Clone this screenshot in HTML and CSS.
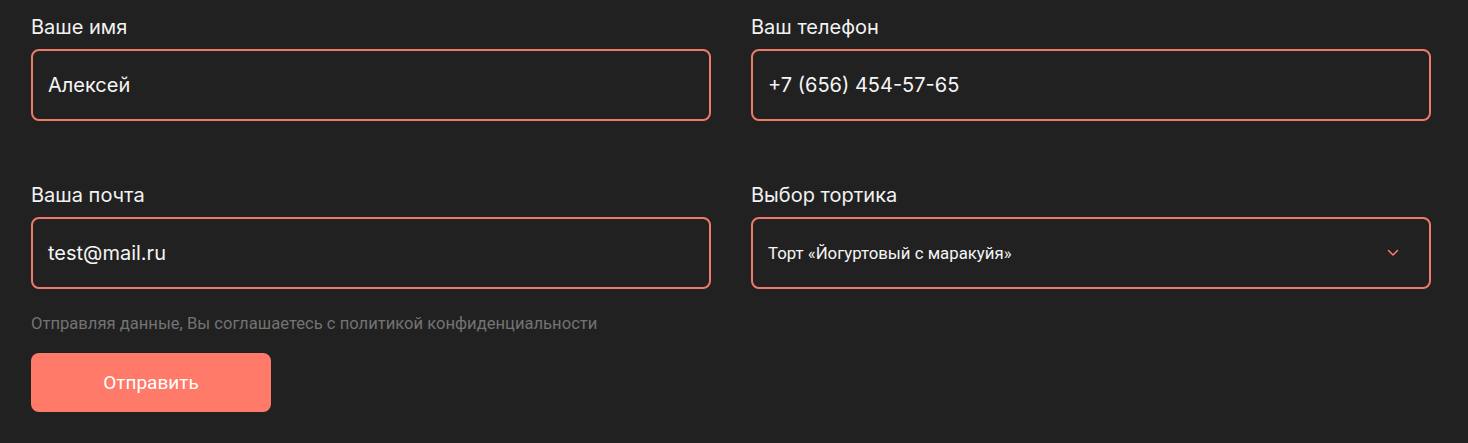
FILE: index.html
```html
<!DOCTYPE html>
<html lang="ru">
<head>
<meta charset="utf-8">
<link rel="stylesheet" href="styles.css">
</head>
<body>
<form class="form">
  <div class="grid">
    <label class="field">
      <span class="label">Ваше имя</span>
      <span class="input">Алексей</span>
    </label>
    <label class="field">
      <span class="label">Ваш телефон</span>
      <span class="input">+7 (656) 454-57-65</span>
    </label>
    <label class="field">
      <span class="label">Ваша почта</span>
      <span class="input">test@mail.ru</span>
    </label>
    <label class="field">
      <span class="label">Выбор тортика</span>
      <span class="input select">
        <span class="select-text">Торт «Йогуртовый с маракуйя»</span>
        <svg class="chevron" width="12" height="8" viewBox="0 0 12 8"><path d="M1.5 1.5 L6 6 L10.5 1.5" fill="none" stroke="#f07a68" stroke-width="1.6" stroke-linecap="round" stroke-linejoin="round"/></svg>
      </span>
    </label>
  </div>
  <p class="note">Отправляя данные, Вы соглашаетесь с политикой конфиденциальности</p>
  <button type="button" class="btn">Отправить</button>
</form>
</body>
</html>
```
FILE: styles.css
```css
html, body {
  margin: 0;
  background: #212121;
}
body {
  font-family: Inter, "Noto Sans", sans-serif;
  color: #ffffff;
}
.form {
  padding: 16px 37px 0 31px;
}
.grid {
  display: grid;
  grid-template-columns: 680px 680px;
  column-gap: 40px;
  row-gap: 63px;
}
.field {
  display: flex;
  flex-direction: column;
  gap: 11px;
}
.label {
  font-size: 20px;
  line-height: 22px;
  height: 22px;
  color: #f2f2f2;
}
.input {
  box-sizing: border-box;
  height: 72px;
  border: 2px solid #f07a68;
  border-radius: 8px;
  display: flex;
  align-items: center;
  padding: 0 15px;
  font-size: 20px;
  color: #f5f5f5;
}
.select {
  justify-content: space-between;
  padding-right: 30px;
}
.select-text {
  font-family: Roboto, "Liberation Sans", sans-serif;
  font-size: 16.8px;
  color: #f5f5f5;
}
.chevron {
  display: block;
}
.note {
  margin: 26px 0 0;
  font-family: Roboto, "Liberation Sans", sans-serif;
  font-size: 16.6px;
  line-height: 18px;
  color: #737373;
}
.btn {
  margin-top: 20px;
  width: 240px;
  height: 59px;
  border: none;
  border-radius: 8px;
  background: #ff7a68;
  color: #ffffff;
  font-family: Roboto, "Liberation Sans", sans-serif;
  font-size: 19px;
  display: block;
  padding: 0;
}
```
